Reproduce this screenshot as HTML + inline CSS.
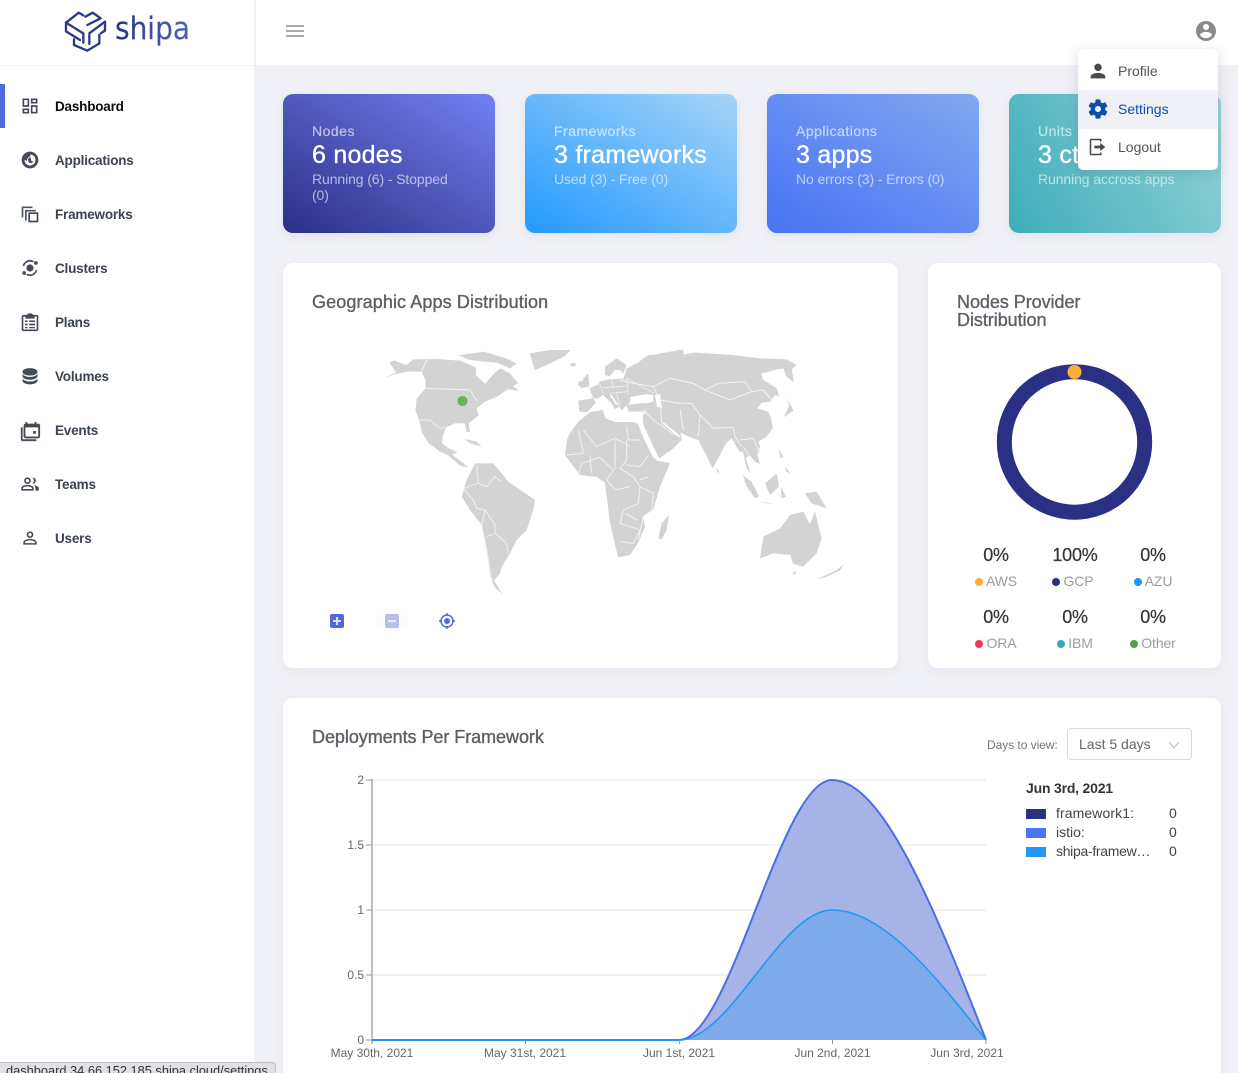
<!DOCTYPE html>
<html><head><meta charset="utf-8"><style>
*{box-sizing:border-box}
html,body{margin:0;padding:0;width:1238px;height:1073px;overflow:hidden;background:#f0f1f6;font-family:"Liberation Sans",sans-serif;color:#333}
body{position:relative}
.a{position:absolute;white-space:nowrap}
#side{position:absolute;left:0;top:0;width:255px;height:1073px;background:#fff;border-right:1px solid #f0f1f6}
#top{position:absolute;left:255px;top:0;width:983px;height:65px;background:#fff}
.nav{position:absolute;left:55px;font-size:13.5px;font-weight:bold;color:#3c4350;letter-spacing:-.2px;line-height:16px;margin-top:1px}
.ni{position:absolute;left:20px;width:20px;height:20px;fill:#444b57}
.card{position:absolute;top:94px;width:212px;height:139px;border-radius:10px;box-shadow:0 3px 10px rgba(60,60,110,.08);color:#fff}
.card .t{position:absolute;left:29px;top:29px;font-size:14px;line-height:16px;opacity:.62;letter-spacing:.5px;-webkit-text-stroke:.25px #fff}
.card .b{position:absolute;left:29px;top:47px;font-size:25px;line-height:28px;letter-spacing:.25px;-webkit-text-stroke:.35px #fff}
.card .s{position:absolute;left:29px;top:77px;width:150px;font-size:14px;line-height:16px;opacity:.62;letter-spacing:-.1px}
.panel{position:absolute;background:#fff;border-radius:10px;box-shadow:0 3px 10px rgba(60,60,110,.06)}
.h{position:absolute;font-size:18px;color:#5c5f66;line-height:18px;letter-spacing:-.05px;-webkit-text-stroke:.35px #5c5f66}
.pc{position:absolute;font-size:18px;color:#333;text-align:center;width:80px;line-height:20px;-webkit-text-stroke:.2px #333;letter-spacing:-.2px}
.lb{position:absolute;font-size:14px;color:#9a9ca3;width:80px;text-align:center;line-height:16px;letter-spacing:-.1px}
.lb i{display:inline-block;width:8px;height:8px;border-radius:50%;margin-right:3px;vertical-align:0}
.mi{position:absolute;left:0;width:90px;font-size:14px;color:#555;line-height:16px}
</style></head><body>
<div id="side"></div>
<div id="top"></div>
<div class="a" style="left:0;top:65px;width:255px;height:1px;background:#f0f1f6"></div>

<!-- logo -->
<svg class="a" style="left:0;top:0" width="255" height="60" viewBox="0 0 255 60">
<defs><linearGradient id="lg" x1="0" x2="1" y1="0" y2="0"><stop offset="0" stop-color="#2a3288"/><stop offset="1" stop-color="#4c66b4"/></linearGradient></defs>
<g transform="scale(.33333)" fill="none" stroke="#2d3a8c" stroke-width="7" stroke-linejoin="round" stroke-linecap="round">
<path d="M198 68L236 38 250 46"/>
<path d="M198 68V94L240 120"/>
<path d="M198 68L250 100V128"/>
<path d="M222 118V135L262 152 298 130V105"/>
<path d="M268 100L315 65V92L302 100"/>
<path d="M262 75L302 55 278 38 256 50"/>
<path d="M268 105V132"/>
</g>
<text x="115" y="39" font-family="'DejaVu Sans',sans-serif" font-size="31" fill="url(#lg)" stroke="url(#lg)" stroke-width=".15" textLength="75" lengthAdjust="spacingAndGlyphs">shipa</text>
</svg>

<!-- nav -->
<div class="a" style="left:0;top:84px;width:5px;height:44px;background:#5468de"></div>
<svg class="ni" style="top:96px" viewBox="0 0 24 24"><path d="M19 5v2h-4V5h4M9 5v6H5V5h4m10 8v6h-4v-6h4M9 17v2H5v-2h4M21 3h-8v6h8V3zM11 3H3v10h8V3zm10 8h-8v10h8V11zm-10 4H3v6h8v-6z"/></svg>
<div class="nav" style="top:98px;color:#0c0c0c">Dashboard</div>
<svg class="ni" style="top:150px" viewBox="0 0 24 24"><path fill-rule="evenodd" d="M12 2a10 10 0 1 0 0 20 10 10 0 0 0 0-20zm.5 3.4c3.4.2 6.1 3 6.1 6.6s-2.900 6.600-6.600 6.600c-3.600 0-6.500-2.900-6.600-6.400 1.600-.1 2.400.6 3 1.600-.4-2.800 1.300-5.700 4.100-6.500zm-.2 3.100c-1.900.6-2.900 2.300-2.600 4.200.3 1.800 1.900 3.100 3.700 2.900 1.300-.2 2.500-1.100 2.900-2.400-1 .6-2 .5-2.800-.1-.2-1.600-.5-3-1.200-4.600z"/></svg>
<div class="nav" style="top:152px">Applications</div>
<svg class="ni" style="top:204px" viewBox="0 0 24 24"><path d="M2 3h13v2H4v11H2zM6 7h13v2H8v11H6z" opacity=".95"/><path fill-rule="evenodd" d="M10 10h12v12H10zm2 2v8h8v-8z"/></svg>
<div class="nav" style="top:206px">Frameworks</div>
<svg class="ni" style="top:258px" viewBox="0 0 24 24"><circle cx="12" cy="12" r="4.300"/><path fill="none" stroke="#444b57" stroke-width="2" d="M4 9.500C5 6 8.200 3.300 12 3.300c1.500 0 2.900.4 4.100 1.100M20 14.500c-1 3.500-4.200 6.200-8 6.200-1.500 0-2.900-.4-4.100-1.100"/><circle cx="19" cy="6" r="2.200"/><circle cx="5" cy="18" r="2.200"/></svg>
<div class="nav" style="top:260px">Clusters</div>
<svg class="ni" style="top:312px" viewBox="0 0 24 24"><path fill-rule="evenodd" d="M4 3.500h4.200C8.600 2.300 10 1.500 12 1.500s3.400.8 3.800 2H20c1 0 2 1 2 2V21c0 1-1 2-2 2H4c-1 0-2-1-2-2V5.500c0-1 1-2 2-2zm0 2V21h16V5.500h-2.500V8h-11V5.500z"/><path d="M6 10h3v2H6zM11 10h7v2h-7zM6 14h3v2H6zM11 14h7v2h-7zM6 18h3v1.500H6zM11 18h7v1.500h-7z"/></svg>
<div class="nav" style="top:314px">Plans</div>
<svg class="ni" style="top:366px" viewBox="0 0 24 24"><ellipse cx="12" cy="7" rx="9" ry="4.500"/><path d="M3 9.500c1.500 2.500 5 3.600 9 3.600s7.500-1.100 9-3.600V12c0 2.500-4 4.500-9 4.500S3 14.500 3 12zM3 15c1.500 2.500 5 3.600 9 3.600s7.500-1.100 9-3.600v2.500c0 2.500-4 4.500-9 4.500s-9-2-9-4.500z"/></svg>
<div class="nav" style="top:368px">Volumes</div>
<svg class="ni" style="top:420px;left:19px;width:22px;height:22px" viewBox="0 0 24 24"><path d="M2 8h2v13h15v2H4c-1.100 0-2-.9-2-2z"/><path fill-rule="evenodd" d="M7 2h2v2h8V2h2v2h2c1 0 2 1 2 2v12c0 1-1 2-2 2H7c-1 0-2-1-2-2V6c0-1 1-2 2-2zm0 6v10h14V8z"/><path d="M15.500 12h3v3h-3z"/></svg>
<div class="nav" style="top:422px">Events</div>
<svg class="ni" style="top:474px" viewBox="0 0 24 24"><path fill-rule="evenodd" d="M9 4a4 4 0 1 0 0 8 4 4 0 0 0 0-8zm0 2a2 2 0 1 1 0 4 2 2 0 0 1 0-4zM9 13c-3 0-7.500 1.300-7.500 4v3h15v-3c0-2.700-4.500-4-7.500-4zm0 2c2.500 0 5.500 1 5.500 2v1h-11v-1c0-1 3-2 5.500-2z"/><path d="M15 4a4 4 0 0 1 0 8c1-1 1.600-2.400 1.600-4S16 5 15 4zM16.500 13.300c3 .5 6 1.800 6 3.700v3h-4v-3c0-1.500-.8-2.800-2-3.700z"/></svg>
<div class="nav" style="top:476px">Teams</div>
<svg class="ni" style="top:528px" viewBox="0 0 24 24"><path d="M12 5.900c1.160 0 2.100.94 2.100 2.100s-.94 2.100-2.100 2.100S9.900 9.160 9.900 8s.94-2.100 2.100-2.100m0 9c2.970 0 6.100 1.460 6.100 2.100v1.100H5.900V17c0-.64 3.130-2.100 6.100-2.100M12 4C9.790 4 8 5.790 8 8s1.790 4 4 4 4-1.790 4-4-1.790-4-4-4zm0 9c-2.670 0-8 1.340-8 4v3h16v-3c0-2.660-5.330-4-8-4z"/></svg>
<div class="nav" style="top:530px">Users</div>

<!-- header -->
<div class="a" style="left:255px;top:0;width:1px;height:65px;background:#f0f1f6"></div>
<svg class="a" style="left:283px;top:19px" width="24" height="24" viewBox="0 0 24 24"><path fill="none" stroke="#777" stroke-width="1.300" d="M3 7h18M3 12h18M3 17h18"/></svg>
<svg class="a" style="left:1194px;top:19px" width="24" height="24" viewBox="0 0 24 24"><path fill="#8a8a8a" d="M12 2C6.480 2 2 6.480 2 12s4.480 10 10 10 10-4.480 10-10S17.520 2 12 2zm0 3c1.660 0 3 1.340 3 3s-1.340 3-3 3-3-1.340-3-3 1.340-3 3-3zm0 14.200c-2.500 0-4.710-1.280-6-3.220.03-1.990 4-3.080 6-3.080 1.990 0 5.970 1.090 6 3.080-1.290 1.940-3.500 3.220-6 3.220z"/></svg>

<!-- stat cards -->
<div class="card" style="left:283px;background:linear-gradient(32deg,#2b3085 0%,#7280f2 100%)">
<div class="t">Nodes</div><div class="b">6 nodes</div><div class="s">Running (6) - Stopped (0)</div></div>
<div class="card" style="left:525px;background:linear-gradient(32deg,#2499ff 0%,#a6d5f8 100%)">
<div class="t">Frameworks</div><div class="b">3 frameworks</div><div class="s">Used (3) - Free (0)</div></div>
<div class="card" style="left:767px;background:linear-gradient(32deg,#4672f5 0%,#82a8f0 100%)">
<div class="t">Applications</div><div class="b">3 apps</div><div class="s" style="width:175px">No errors (3) - Errors (0)</div></div>
<div class="card" style="left:1009px;background:linear-gradient(62deg,#3fadbb 0%,#93d3d7 100%)">
<div class="t">Units</div><div class="b">3 ct</div><div class="s" style="width:175px">Running accross apps</div></div>

<!-- map panel -->
<div class="panel" style="left:283px;top:263px;width:615px;height:405px"></div>
<div class="h" style="left:312px;top:293px;letter-spacing:.11px">Geographic Apps Distribution</div>

<!-- donut panel -->
<div class="panel" style="left:928px;top:263px;width:293px;height:405px"></div>
<div class="h" style="left:957px;top:293px">Nodes Provider<br>Distribution</div>
<svg class="a" style="left:990px;top:358px" width="170" height="170">
<circle cx="84.500" cy="84" r="70.200" fill="none" stroke="#2a3185" stroke-width="15"/>
<circle cx="84.500" cy="14" r="7" fill="#fbb03b"/></svg>
<div class="pc" style="left:956px;top:545px">0%</div>
<div class="pc" style="left:1035px;top:545px">100%</div>
<div class="pc" style="left:1113px;top:545px">0%</div>
<div class="pc" style="left:956px;top:607px">0%</div>
<div class="pc" style="left:1035px;top:607px">0%</div>
<div class="pc" style="left:1113px;top:607px">0%</div>
<div class="lb" style="left:956px;top:573px"><i style="background:#fbb03b"></i>AWS</div>
<div class="lb" style="left:1033px;top:573px"><i style="background:#2a3185"></i>GCP</div>
<div class="lb" style="left:1113px;top:573px"><i style="background:#2196f3"></i>AZU</div>
<div class="lb" style="left:956px;top:635px"><i style="background:#f5344f"></i>ORA</div>
<div class="lb" style="left:1035px;top:635px"><i style="background:#3aaab8"></i>IBM</div>
<div class="lb" style="left:1113px;top:635px"><i style="background:#4ea23f"></i>Other</div>

<!-- chart panel -->
<div class="panel" style="left:283px;top:698px;width:938px;height:385px"></div>
<div class="h" style="left:312px;top:728px">Deployments Per Framework</div>
<div class="a" style="left:987px;top:738px;font-size:12px;line-height:14px;color:#777;letter-spacing:-.05px">Days to view:</div>
<div class="a" style="left:1067px;top:728px;width:125px;height:32px;border:1px solid #d9d9d9;border-radius:4px;font-size:14px;color:#666;line-height:30px;padding-left:11px">Last 5 days</div>
<svg class="a" style="left:1168px;top:740px" width="12" height="10"><path d="M1 2l5 6 5-6" fill="none" stroke="#bbb" stroke-width="1"/></svg>
<div class="a" style="left:1026px;top:780px;font-size:14px;font-weight:bold;color:#333;line-height:16px;letter-spacing:-.2px">Jun 3rd, 2021</div>
<div class="a" style="left:1026px;top:809px;width:20px;height:10px;background:#2a3185"></div>
<div class="a" style="left:1026px;top:828px;width:20px;height:10px;background:#4a76f5"></div>
<div class="a" style="left:1026px;top:847px;width:20px;height:10px;background:#2196fb"></div>
<div class="a" style="left:1056px;top:805px;font-size:14px;line-height:16px;color:#444;letter-spacing:.1px">framework1:</div>
<div class="a" style="left:1056px;top:824px;font-size:14px;line-height:16px;color:#444">istio:</div>
<div class="a" style="left:1056px;top:843px;font-size:14px;line-height:16px;color:#444;letter-spacing:-.3px">shipa-framew…</div>
<div class="a" style="left:1169px;top:805px;font-size:14px;line-height:16px;color:#444">0</div>
<div class="a" style="left:1169px;top:824px;font-size:14px;line-height:16px;color:#444">0</div>
<div class="a" style="left:1169px;top:843px;font-size:14px;line-height:16px;color:#444">0</div>

<svg class="a" style="left:0;top:0" width="1238" height="1073" viewBox="0 0 1238 1073">
<!-- chart -->
<g stroke="#f0f1f6" stroke-width="2"><path d="M373 780H986M373 845H986M373 910H986M373 975H986"/></g>
<path d="M679 1040C730 1040 781 780 832 780C883 780 935 910 986 1040Z" fill="#a5b3e6"/>
<path d="M679 1040C730 1040 781 910 832 910C883 910 935 975 986 1040Z" fill="#7dabe9"/>
<path d="M679 1040C730 1040 781 780 832 780C883 780 935 910 986 1040" fill="none" stroke="#4a6ee8" stroke-width="2"/>
<path d="M679 1040C730 1040 781 910 832 910C883 910 935 975 986 1040" fill="none" stroke="#2196f3" stroke-width="1.500"/>
<path d="M372 779V1044" stroke="#a8a8a8" stroke-width="1.500"/>
<g stroke="#999" stroke-width="1"><path d="M366 780h6M366 845h6M366 910h6M366 975h6M366 1040h6"/><path d="M525.500 1040v4M679.500 1040v4M832.500 1040v4M986 1040v4"/></g>
<path d="M372 1040H679" stroke="#2196f3" stroke-width="2"/>
<g font-family="'Liberation Sans',sans-serif" font-size="12" fill="#666">
<g text-anchor="end"><text x="364" y="784">2</text><text x="364" y="849">1.5</text><text x="364" y="914">1</text><text x="364" y="979">0.5</text><text x="364" y="1044">0</text></g>
<g text-anchor="middle"><text x="372" y="1057">May 30th, 2021</text><text x="525" y="1057">May 31st, 2021</text><text x="679" y="1057">Jun 1st, 2021</text><text x="832.500" y="1057">Jun 2nd, 2021</text><text x="967" y="1057">Jun 3rd, 2021</text></g>
</g>

<!-- map -->
<g fill="#d3d3d3">
<g transform="translate(370 340) scale(.33333)">
<path d="M40 115L78 97 60 70 72 62 110 75 130 58 200 57 270 62 318 82 318 105 345 132 362 112 378 95 392 85 420 100 445 130 428 138 447 152 412 148 382 170 345 185 320 205 326 226 296 250 300 276 290 276 284 250 255 250 228 262 218 288 216 310 236 325 250 330 262 338 246 344 270 362 296 382 272 378 234 346 210 335 176 310 156 278 146 236 136 212 140 176 166 145 166 120 155 95 112 95 76 102Z"/>
<path d="M265 46L340 35 400 52 440 70 420 85 380 68 345 65 300 60Z"/>
<path d="M480 40L540 30 602 30 582 50 530 75 495 90 486 65Z"/>
<path d="M285 297L320 305 335 320 300 310ZM60 65L75 62 78 72 62 72Z"/>
<path d="M315 370L370 370 415 425 495 480 490 510 470 570 440 600 420 640 395 680 390 700 372 722 398 762 376 745 360 710 350 630 336 556 300 510 275 470 290 420Z"/>
</g>
<path d="M565 455L567 440 570 433 578 422 590 412 603 410 605 418 615 422 623 422 633 422 638 424 643 437 653 457 658 461 670 463 660 487 653 510 643 517 645 527 638 543 630 555 620 557 618 557 610 523 605 483 597 477 580 475Z"/>
<g transform="translate(570 350) scale(.33333)">
<path d="M25 152L70 145 78 158 58 180 50 187 28 185Z"/>
<path d="M58 115L85 103 88 95 115 88 170 85 172 72 190 60 230 40 262 12 340 -2 340 130 250 130 215 135 185 140 178 160 165 170 155 182 145 165 125 135 105 130 85 145 70 145Z"/>
<path d="M98 132L115 128 135 160 148 170 135 178 125 160 105 140Z"/>
<path d="M105 50L140 25 170 45 160 70 150 60 135 60 120 80 105 75Z"/>
<path d="M40 85L55 70 58 110 30 115ZM25 95L38 92 35 108 25 108ZM0 40L15 38 18 48 5 50Z"/>
</g>
<g transform="translate(620 340) scale(.33333)">
<path d="M20 85L50 70 85 45 130 42 165 48 225 38 340 45 420 55 500 58 530 75 515 88 522 128 500 110 490 85 465 90 425 100 428 118 470 145 478 170 465 165 450 185 425 188 412 205 445 215 455 240 458 265 440 290 415 305 420 320 412 345 420 372 405 365 388 345 378 355 392 400 380 385 368 335 358 335 335 295 318 310 300 345 278 385 258 345 235 300 205 290 182 278 185 300 160 325 118 355 100 320 70 255 68 225 82 215 25 215 20 195 60 190 100 185 100 165 0 150Z"/>
<path d="M115 595L125 550 147 525 140 570 125 598Z"/>
<path d="M368 405L395 425 417 470 405 475 380 440Z"/>
<path d="M435 430L470 400 477 440 450 465Z"/>
<path d="M415 482L460 492 440 490Z"/>
<path d="M555 460L590 455 620 505 575 490Z"/>
<path d="M420 655L430 590 480 565 510 525 550 515 570 552 585 515 605 595 590 640 550 680 520 672 510 645 460 640Z"/>
<path d="M515 700L530 692 525 703ZM590 718L650 690 672 672 660 692 620 710Z"/>
<path d="M290 380L298 397 292 398ZM475 325L490 350 482 355ZM495 380L512 400 498 395ZM490 232L520 212 500 172 508 198ZM482 440L498 470 485 475Z"/>
</g>
</g>
<!-- inland seas -->
<path d="M630 397L642 395 653 398 650 403 640 403 631 403Z" fill="#fff"/>
<path d="M655 395L660 394 662 408 657 407Z" fill="#fff"/>
<path d="M663 423L680 437" stroke="#fff" stroke-width="1.800" fill="none"/>
<g fill="none" stroke="#f2f2f2">
<g transform="translate(370 340) scale(.33333)" stroke-width="3">
<path d="M165 145L300 150 320 182M155 95L170 60M150 240L180 240 210 265 222 262"/>
<path d="M320 375L325 430 350 440 375 410 395 425M325 430L280 445 300 470 310 480 320 505 345 510 375 555 375 580 410 610 415 640M345 510L335 555 350 630 365 720M375 580L350 590"/>
<path d="M625 270L640 340 590 345M680 320L640 270M680 320L735 295 780 320M625 405L635 370 690 352 730 390 710 420 735 450 780 440M735 300L735 390M660 345L665 400"/>
</g>
<g transform="translate(570 350) scale(.33333)" stroke-width="2.400">
<path d="M60 143L75 145M88 100L100 130M125 90L130 115M100 113L170 108M120 130L172 125M170 85L176 135M170 85L250 128M110 90L135 60M140 130L150 165"/>
</g>
<g transform="translate(620 340) scale(.33333)" stroke-width="3">
<path d="M0 120L40 130 100 140 150 115 220 130 255 150 330 180 395 155 430 150 455 180M255 150L295 130 375 125 395 155"/>
<path d="M100 140L120 180 180 190 215 190 240 225 280 265 340 262 345 290 365 320M240 225L235 290M180 210L190 270M120 180L125 250M70 210L100 240 165 285M360 300L400 295 420 340M370 320L395 360"/>
<path d="M20 260L25 300 60 300M20 300L20 360 0 385 40 410 60 440 100 460 95 510 70 530 55 600M20 375L60 380 85 345M60 440L55 490 10 510 0 550 30 560 60 570 40 610 0 605M85 410L60 420M15 520L50 540"/>
</g>
</g>
<circle cx="462.500" cy="401" r="5" fill="#6fae5f" stroke="#8cc17f" stroke-width=".5"/>

<!-- map controls -->
<rect x="330" y="614" width="14" height="14" rx="2" fill="#5468de"/><path d="M333 621h8M337 617v8" stroke="#dfe3fa" stroke-width="2"/>
<rect x="377" y="609" width="30" height="21" fill="#fcfcfc"/>
<rect x="385" y="614" width="14" height="14" rx="2" fill="#b7bff0"/><path d="M388 621h8" stroke="#eceefc" stroke-width="2"/>
<circle cx="447" cy="621" r="6" fill="none" stroke="#5468de" stroke-width="1.500"/><circle cx="447" cy="621" r="3" fill="#5468de"/><path d="M447 613v3M447 626v3M439 621h3M452 621h3" stroke="#5468de" stroke-width="1.500"/>
</svg>

<!-- dropdown -->
<div class="a" style="left:1078px;top:49px;width:140px;height:121px;background:#fff;border-radius:5px;box-shadow:0 3px 14px rgba(40,40,70,.14);overflow:hidden">
<div class="a" style="left:0;top:41px;width:140px;height:39px;background:#f0f1f6"></div>
<svg class="a" style="left:9px;top:11px" width="22" height="22" viewBox="0 0 24 24"><path fill="#4a4a4a" d="M12 12c2.210 0 4-1.790 4-4s-1.790-4-4-4-4 1.790-4 4 1.790 4 4 4zm0 2c-2.670 0-8 1.340-8 4v2h16v-2c0-2.660-5.330-4-8-4z"/></svg>
<svg class="a" style="left:8px;top:48px" width="24" height="24" viewBox="0 0 24 24"><path fill="#0b4fae" fill-rule="evenodd" d="M19.140 12.940c.04-.3.06-.61.06-.94 0-.32-.02-.64-.07-.94l2.030-1.580c.18-.14.23-.41.12-.61l-1.920-3.320c-.12-.22-.37-.29-.59-.22l-2.390.96c-.5-.38-1.030-.7-1.620-.94l-.36-2.540c-.04-.24-.24-.41-.48-.41h-3.840c-.24 0-.43.17-.47.41l-.36 2.540c-.59.24-1.130.57-1.620.94l-2.390-.96c-.22-.08-.47 0-.59.22L2.740 8.870c-.12.21-.08.47.12.61l2.030 1.580c-.05.3-.09.63-.09.94s.02.64.07.94l-2.030 1.580c-.18.14-.23.41-.12.61l1.920 3.320c.12.22.37.29.59.22l2.390-.96c.5.38 1.030.7 1.620.94l.36 2.540c.05.24.24.41.48.41h3.840c.24 0 .44-.17.47-.41l.36-2.540c.59-.24 1.130-.56 1.620-.94l2.390.96c.22.08.47 0 .59-.22l1.920-3.320c.12-.22.07-.47-.12-.61l-2.010-1.580zM12 15.000c-1.650 0-3-1.350-3-3s1.350-3 3-3 3 1.350 3 3-1.350 3-3 3z"/></svg>
<svg class="a" style="left:9px;top:87px" width="22" height="22" viewBox="0 0 24 24"><path fill="none" stroke="#4a4a4a" stroke-width="1.700" d="M15 6V3.800H4.800c-.6 0-1 .4-1 1v14.400c0 .6.4 1 1 1H15V18"/><path fill="#4a4a4a" d="M8 10.500h6.500V7.500l5.500 4.500-5.500 4.500v-3H8z"/></svg>
<div class="mi" style="left:40px;top:14px">Profile</div>
<div class="mi" style="left:40px;top:52px;color:#0b4fae">Settings</div>
<div class="mi" style="left:40px;top:90px">Logout</div>
</div>

<!-- status bar -->
<div class="a" style="left:-2px;top:1062px;width:278px;height:14px;background:#dfe1e5;border:1px solid #bfc1c6;border-radius:0 4px 0 0;font-size:12.800px;line-height:14px;color:#333;padding:1px 0 0 7px;overflow:hidden">dashboard.34.66.152.185.shipa.cloud/settings</div>
</body></html>
